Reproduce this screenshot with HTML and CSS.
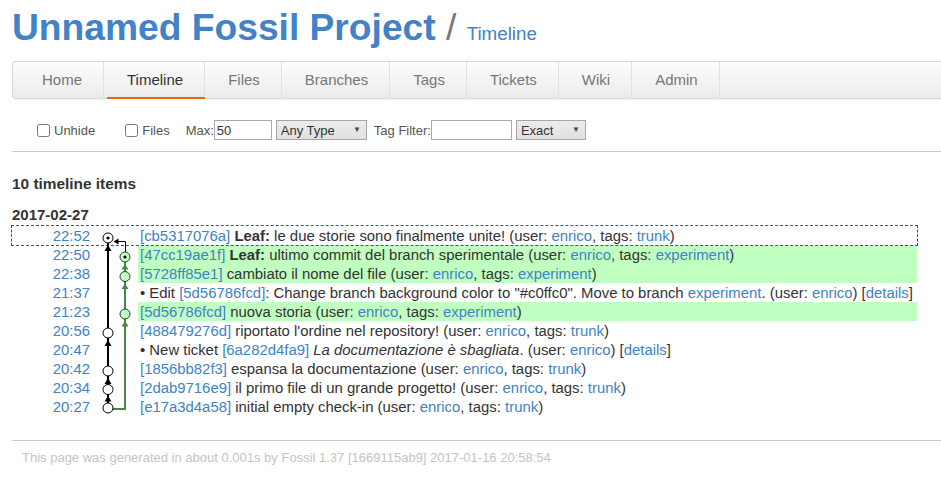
FILE: index.html
```html
<!DOCTYPE html>
<html lang="it">
<head>
<meta charset="utf-8">
<title>Unnamed Fossil Project: Timeline</title>
<link rel="stylesheet" href="styles.css">
</head>
<body>
<div class="page">
  <header class="header">
    <span class="title">Unnamed Fossil Project</span><span class="slash"> / </span><span class="subtitle">Timeline</span>
  </header>

  <nav class="mainmenu">
    <a href="#">Home</a>
    <a href="#" class="active">Timeline</a>
    <a href="#">Files</a>
    <a href="#">Branches</a>
    <a href="#">Tags</a>
    <a href="#">Tickets</a>
    <a href="#">Wiki</a>
    <a href="#">Admin</a>
  </nav>

  <form class="filters">
    <label class="chk"><input type="checkbox">Unhide</label>
    <label class="chk chk-files"><input type="checkbox">Files</label>
    <span class="maxlbl">Max:</span><input class="txt txt-max" type="text" value="50">
    <span class="selwrap"><select class="sel sel-any"><option>Any Type</option></select><span class="arrow">&#9660;</span></span>
    <span class="taglbl">Tag Filter:</span><input class="txt txt-tag" type="text" value="">
    <span class="selwrap"><select class="sel sel-exact"><option>Exact</option></select><span class="arrow">&#9660;</span></span>
  </form>

  <hr class="rule">

  <h2 class="count">10 timeline items</h2>
  <div class="date">2017-02-27</div>

  <div class="timeline">
    <svg class="graph" width="48" height="190" viewBox="0 0 48 190">
      <line x1="16" y1="17" x2="16" y2="177" stroke="#000" stroke-width="2"/>
      <path d="M16 19 L19.5 25 L12.5 25 Z" fill="#000"/>
      <path d="M16 114 L19.5 120 L12.5 120 Z" fill="#000"/>
      <path d="M16 152 L19.5 158 L12.5 158 Z" fill="#000"/>
      <path d="M16 170 L19.5 175.5 L12.5 175.5 Z" fill="#000"/>

      <path d="M33.5 26 V15.5 H25" stroke="#000" stroke-width="1" fill="none"/>
      <path d="M21.5 15.5 L26.5 12.5 L26.5 18.5 Z" fill="#000"/>

      <path d="M33 36 V183 H21" stroke="#478747" stroke-width="2" fill="none"/>
      <path d="M33 38 L36.5 43.5 L29.5 43.5 Z" fill="#478747"/>
      <path d="M33 57.5 L36.5 63 L29.5 63 Z" fill="#478747"/>
      <path d="M33 95 L36.5 100.5 L29.5 100.5 Z" fill="#478747"/>

      <circle cx="16" cy="12" r="5" fill="#fff" stroke="#000"/>
      <circle cx="16" cy="12" r="1.6" fill="#000"/>
      <circle cx="33" cy="31" r="5" fill="#c0ffc0" stroke="#2b3b2b"/>
      <circle cx="33" cy="31" r="1.6" fill="#000"/>
      <circle cx="33" cy="50.5" r="5" fill="#c0ffc0" stroke="#2b3b2b"/>
      <circle cx="33" cy="88" r="5" fill="#c0ffc0" stroke="#2b3b2b"/>
      <circle cx="16" cy="107" r="5" fill="#fff" stroke="#000"/>
      <circle cx="16" cy="145" r="5" fill="#fff" stroke="#000"/>
      <circle cx="16" cy="163.5" r="5" fill="#fff" stroke="#000"/>
      <circle cx="16" cy="182" r="5" fill="#fff" stroke="#000"/>
    </svg>

    <div class="row current">
      <div class="time"><a href="#">22:52</a></div><div class="gcell"></div>
      <div class="msg"><a href="#">[cb5317076a]</a> <b>Leaf:</b> le due storie sono finalmente unite! (user: <a href="#">enrico</a>, tags: <a href="#">trunk</a>)</div>
    </div>
    <div class="row branch">
      <div class="time"><a href="#">22:50</a></div><div class="gcell"></div>
      <div class="msg"><a href="#">[47cc19ae1f]</a> <b>Leaf:</b> ultimo commit del branch sperimentale (user: <a href="#">enrico</a>, tags: <a href="#">experiment</a>)</div>
    </div>
    <div class="row branch">
      <div class="time"><a href="#">22:38</a></div><div class="gcell"></div>
      <div class="msg"><a href="#">[5728ff85e1]</a> cambiato il nome del file (user: <a href="#">enrico</a>, tags: <a href="#">experiment</a>)</div>
    </div>
    <div class="row">
      <div class="time"><a href="#">21:37</a></div><div class="gcell"></div>
      <div class="msg">&bull; Edit <a href="#">[5d56786fcd]</a>: Change branch background color to "#c0ffc0". Move to branch <a href="#">experiment</a>. (user: <a href="#">enrico</a>) [<a href="#">details</a>]</div>
    </div>
    <div class="row branch">
      <div class="time"><a href="#">21:23</a></div><div class="gcell"></div>
      <div class="msg"><a href="#">[5d56786fcd]</a> nuova storia (user: <a href="#">enrico</a>, tags: <a href="#">experiment</a>)</div>
    </div>
    <div class="row">
      <div class="time"><a href="#">20:56</a></div><div class="gcell"></div>
      <div class="msg"><a href="#">[488479276d]</a> riportato l'ordine nel repository! (user: <a href="#">enrico</a>, tags: <a href="#">trunk</a>)</div>
    </div>
    <div class="row">
      <div class="time"><a href="#">20:47</a></div><div class="gcell"></div>
      <div class="msg">&bull; New ticket <a href="#">[6a282d4fa9]</a> <i>La documentazione è sbagliata</i>. (user: <a href="#">enrico</a>) [<a href="#">details</a>]</div>
    </div>
    <div class="row">
      <div class="time"><a href="#">20:42</a></div><div class="gcell"></div>
      <div class="msg"><a href="#">[1856bb82f3]</a> espansa la documentazione (user: <a href="#">enrico</a>, tags: <a href="#">trunk</a>)</div>
    </div>
    <div class="row">
      <div class="time"><a href="#">20:34</a></div><div class="gcell"></div>
      <div class="msg"><a href="#">[2dab9716e9]</a> il primo file di un grande progetto! (user: <a href="#">enrico</a>, tags: <a href="#">trunk</a>)</div>
    </div>
    <div class="row">
      <div class="time"><a href="#">20:27</a></div><div class="gcell"></div>
      <div class="msg"><a href="#">[e17a3d4a58]</a> initial empty check-in (user: <a href="#">enrico</a>, tags: <a href="#">trunk</a>)</div>
    </div>
  </div>

  <hr class="rule rule-foot">
  <footer class="footer">This page was generated in about 0.001s by Fossil 1.37 [1669115ab9] 2017-01-16 20:58:54</footer>
</div>
</body>
</html>
```

FILE: styles.css
```css
html, body {
  margin: 0;
  padding: 0;
  overflow: hidden;
  background: #fff;
}

body {
  font-family: "Liberation Sans", Arial, Helvetica, sans-serif;
  color: #333;
}

a {
  color: #4183c4;
  text-decoration: none;
}

.page {
  padding-left: 12px;
}

/* ---------- header ---------- */
.header {
  display: block;
  height: 41px;
  padding-top: 7px;
  font-size: 37.2px;
  line-height: 41px;
  white-space: nowrap;
}

.title {
  font-weight: bold;
  color: #4382c6;
}

.slash {
  color: #777;
}

.subtitle {
  font-size: 18.8px;
  line-height: 1;
  color: #4382c6;
}

/* ---------- main menu ---------- */
.mainmenu {
  display: flex;
  height: 36px;
  margin-top: 13px;
  margin-right: -30px;
  padding-left: 6px;
  border: 1px solid #dadada;
  border-right: 0;
  border-radius: 4px 0 0 4px;
  background: linear-gradient(#fdfdfd, #ebebeb);
  box-shadow: 0 1px 2px rgba(0, 0, 0, 0.05);
}

.mainmenu a {
  position: relative;
  display: block;
  padding: 0 21px 0 23px;
  line-height: 36px;
  font-size: 15px;
  color: #777;
  border-right: 1px solid #e1e1e1;
}

.mainmenu a.active {
  color: #333;
}

.mainmenu a.active::after {
  content: "";
  position: absolute;
  left: 3px;
  right: -1px;
  bottom: -1px;
  height: 2px;
  background: #dd6b1a;
}

/* ---------- filters ---------- */
.filters {
  display: flex;
  align-items: center;
  height: 20px;
  margin-top: 21px;
  padding-left: 25px;
  font-size: 13px;
  color: #555;
}

.chk {
  display: flex;
  align-items: center;
}

.chk input {
  width: 13px;
  height: 13px;
  margin: 0 4px 0 0;
}

.chk-files {
  margin-left: 30px;
}

.maxlbl {
  margin-left: 16px;
}

.txt {
  box-sizing: border-box;
  height: 20px;
  padding: 1px 2px;
  border: 1px solid #a9a9a9;
  font: 13px "Liberation Sans", Arial, sans-serif;
  color: #333;
  background: #fff;
}

.txt-max {
  width: 58px;
}

.txt-tag {
  width: 81px;
}

.selwrap {
  position: relative;
  display: flex;
  margin-left: 4px;
}

.sel {
  appearance: none;
  -webkit-appearance: none;
  box-sizing: border-box;
  height: 20px;
  padding: 0 16px 0 4px;
  border: 1px solid #a6a6a6;
  border-radius: 0;
  background: linear-gradient(#ececec, #e0e0e0);
  font: 13px "Liberation Sans", Arial, sans-serif;
  color: #333;
}

.sel-any {
  width: 91px;
}

.sel-exact {
  width: 70px;
}

.arrow {
  position: absolute;
  right: 6px;
  top: 5px;
  font-size: 8px;
  line-height: 10px;
  color: #444;
  pointer-events: none;
}

.taglbl {
  margin-left: 7px;
}

/* ---------- rules ---------- */
.rule {
  height: 0;
  margin: 11px 0 0;
  border: 0;
  border-top: 1px solid #ccc;
}

.rule-foot {
  margin-top: 24px;
}

/* ---------- timeline ---------- */
.count {
  margin: 23px 0 0;
  font-size: 15.4px;
  font-weight: bold;
  line-height: 18px;
}

.date {
  margin-top: 13px;
  font-size: 15px;
  font-weight: bold;
  line-height: 18px;
}

.timeline {
  position: relative;
  width: 905px;
  margin-top: 2px;
  font-size: 14.9px;
}

.graph {
  position: absolute;
  left: 80px;
  top: 0;
  z-index: 1;
}

.row {
  display: grid;
  grid-template-columns: 83px 43px 1fr;
  height: 19px;
  line-height: 21px;
}

.row.current {
  outline: 1px dashed #3c5a6e;
}

.time {
  padding-right: 5px;
  text-align: right;
  overflow: hidden;
}

.msg {
  padding-left: 2px;
  white-space: nowrap;
  overflow: hidden;
}

.row.branch .msg {
  background: #c0ffc0;
}

/* ---------- footer ---------- */
.footer {
  margin-top: 8px;
  padding-left: 10px;
  font-size: 13px;
  line-height: 18px;
  color: #c4c4c4;
}
```
